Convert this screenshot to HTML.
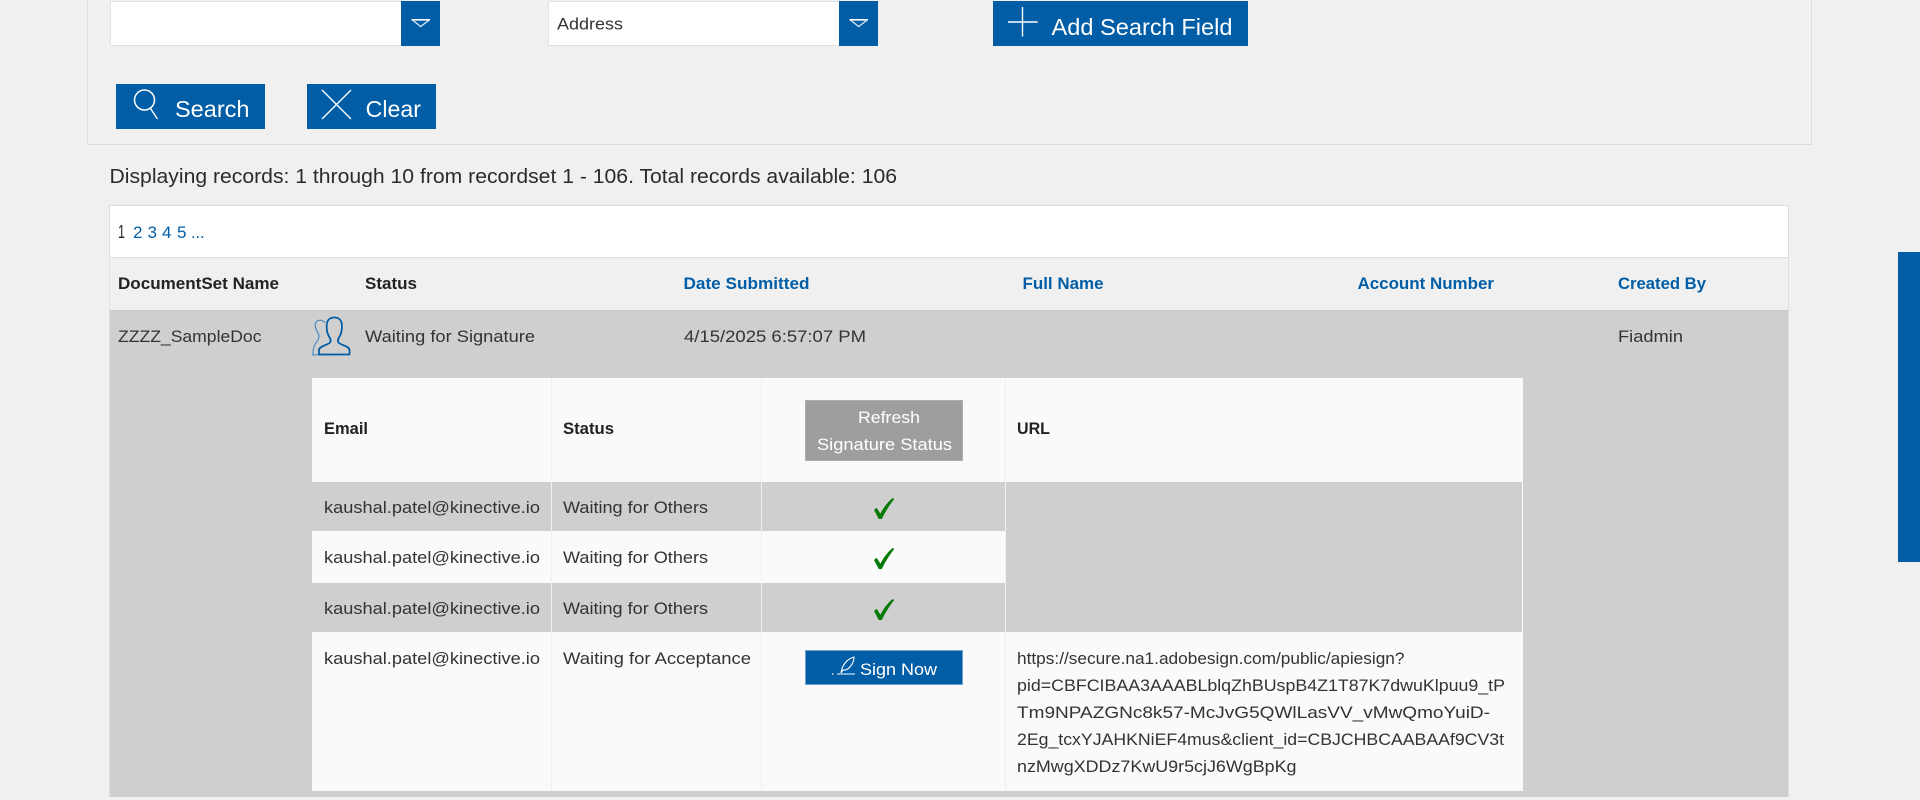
<!DOCTYPE html>
<html lang="en">
<head>
<meta charset="utf-8">
<title>Document Search</title>
<style>
html,body{margin:0;padding:0;background:#f0f0f0;}
body{position:relative;width:1920px;height:800px;overflow:hidden;font-family:"Liberation Sans",Arial,sans-serif;}
.b{position:absolute;box-sizing:border-box;}
.blue{background:#005da6;}
svg{position:absolute;left:0;top:0;}
text{font-family:"Liberation Sans",Arial,sans-serif;font-size:17px;fill:#333;}
.bd{font-weight:bold;fill:#222;}
.lk{font-weight:bold;fill:#005da6;}
.w{fill:#fff;}
</style>
</head>
<body>
<!-- search panel -->
<div class="b" style="left:87px;top:-10px;width:1725px;height:155px;border:1px solid #dcdcdc;border-top:0;"></div>
<div class="b" style="left:110px;top:1px;width:292px;height:45px;background:#fff;border:1px solid #e2e2e2;"></div>
<div class="b blue" style="left:401px;top:1px;width:39px;height:45px;"></div>
<div class="b" style="left:548px;top:1px;width:292px;height:45px;background:#fff;border:1px solid #e2e2e2;"></div>
<div class="b blue" style="left:839px;top:1px;width:39px;height:45px;"></div>
<div class="b blue" style="left:993px;top:1px;width:255px;height:45px;"></div>
<div class="b blue" style="left:116px;top:84px;width:149px;height:45px;"></div>
<div class="b blue" style="left:307px;top:84px;width:129px;height:45px;"></div>
<!-- grid -->
<div class="b" style="left:109px;top:205px;width:1680px;height:53px;background:#fff;border:1px solid #dedede;"></div>
<div class="b" style="left:109px;top:257px;width:1680px;height:54px;background:#f0f0f0;border:1px solid #dedede;border-top:1px solid #dedede;"></div>
<div class="b" style="left:109px;top:310px;width:1680px;height:487px;background:#cfcfcf;border-left:1px solid #dedede;border-right:1px solid #dedede;border-top:1px solid #c9c9c9;"></div>
<!-- inner table -->
<div class="b" style="left:312px;top:378px;width:1211px;height:413px;background:#fafafa;"></div>
<div class="b" style="left:312px;top:482px;width:450px;height:49px;background:#cfcfcf;"></div>
<div class="b" style="left:762px;top:482px;width:243px;height:49px;background:#cfcfcf;"></div>
<div class="b" style="left:312px;top:583px;width:693px;height:49px;background:#cfcfcf;"></div>
<div class="b" style="left:1006px;top:482px;width:516px;height:150px;background:#cfcfcf;"></div>
<div class="b" style="left:551px;top:378px;width:1px;height:413px;background:#f0f0f0;"></div>
<div class="b" style="left:761px;top:378px;width:1px;height:413px;background:#f0f0f0;"></div>
<div class="b" style="left:1005px;top:378px;width:1px;height:413px;background:#f0f0f0;"></div>
<!-- buttons inside table -->
<div class="b" style="left:805px;top:400px;width:158px;height:61px;background:#a09e9c;border:1px solid #b0aeac;"></div>
<div class="b blue" style="left:805px;top:650px;width:158px;height:35px;border:1px solid #6ea3cf;"></div>
<!-- right side tab -->
<div class="b blue" style="left:1898px;top:252px;width:22px;height:310px;"></div>

<svg width="1920" height="800" viewBox="0 0 1920 800" xmlns="http://www.w3.org/2000/svg">
  <!-- dropdown arrows -->
  <g fill="none" stroke="#fff">
    <path d="M411.5 19.8H430" stroke-width="1.6"/>
    <path d="M413 20.5L420.7 26.5L428.5 20.5" stroke="#d6e6f4" stroke-width="1.3"/>
    <path d="M849.5 19.8H868" stroke-width="1.6"/>
    <path d="M851 20.5L858.7 26.5L866.5 20.5" stroke="#d6e6f4" stroke-width="1.3"/>
    <!-- plus -->
    <path d="M1008 22H1037.6M1022.5 7V36.5" stroke-width="1.4"/>
    <!-- magnifier -->
    <ellipse cx="144.5" cy="100" rx="10" ry="10" stroke-width="1.5"/>
    <path d="M150.5 108.5L157.5 119" stroke-width="1.4"/>
    <!-- clear x -->
    <path d="M322 90L351 119M351 90L322 119" stroke-width="1.4"/>
    <!-- quill -->
    <path d="M841 673C842 665 847 659 854 657C854 664 848 671 843 670Z" stroke-width="1.1"/>
    <path d="M837 674H855" stroke-width="1"/>
    <path d="M832 674H833.5" stroke-width="1.2"/>
  </g>

  <!-- person icon -->
  <path d="M325 322.5C321 319 317 320 315.5 323C314.5 327 316 330 318 333C320 336 318.5 340 316.5 342C314 345 313 349 312.8 354.8H330" fill="none" stroke="#4c8cc4" stroke-width="1.2"/>
  <path d="M319 354.5V350C319 346 328 345 330 342.5C331.5 340.5 330 338 328.5 335.5C327 332.5 326.5 329 326.7 325C327 320 330 317.5 334.3 317.5C338.6 317.5 341.6 320 341.9 325C342.1 329 341.6 332.5 340.1 335.5C338.6 338 337 340.5 338.5 342.5C340.5 345 349.5 346 349.5 350V354.5Z" fill="none" stroke="#005da6" stroke-width="1.8" stroke-linejoin="round"/>

  <!-- checks -->
  <g fill="#067a06">
    <path d="M874 510L876.6 507.8L880.4 513.6C884 506.6 888.2 501.6 892.6 498L894.2 499C889.6 505 885 512 881.8 519H878.8Z"/>
    <path d="M874 560L876.6 557.8L880.4 563.6C884 556.6 888.2 551.6 892.6 548L894.2 549C889.6 555 885 562 881.8 569H878.8Z"/>
    <path d="M874 611L876.6 608.8L880.4 614.6C884 607.6 888.2 602.6 892.6 599L894.2 600C889.6 606 885 613 881.8 620H878.8Z"/>
  </g>

  <!-- top controls text -->
  <text x="557" y="29.5" textLength="66" lengthAdjust="spacingAndGlyphs" style="font-size:17px">Address</text>
  <text class="w" x="1051.5" y="35" textLength="181" lengthAdjust="spacingAndGlyphs" style="font-size:23px">Add Search Field</text>
  <text class="w" x="175" y="117" textLength="74.5" lengthAdjust="spacingAndGlyphs" style="font-size:23px">Search</text>
  <text class="w" x="365.7" y="117" textLength="55.3" lengthAdjust="spacingAndGlyphs" style="font-size:23px">Clear</text>
  <text x="109.5" y="183" textLength="787.5" lengthAdjust="spacingAndGlyphs" style="font-size:20px;fill:#2b2b2b">Displaying records: 1 through 10 from recordset 1 - 106. Total records available: 106</text>

  <!-- pager -->
  <g>
    <text x="118" y="238" style="font-size:18px;fill:#222" textLength="7" lengthAdjust="spacingAndGlyphs">1</text>
    <text x="133" y="238" style="fill:#005da6" textLength="9.5" lengthAdjust="spacingAndGlyphs">2</text>
    <text x="147.5" y="238" style="fill:#005da6" textLength="9.5" lengthAdjust="spacingAndGlyphs">3</text>
    <text x="162" y="238" style="fill:#005da6" textLength="9.5" lengthAdjust="spacingAndGlyphs">4</text>
    <text x="177" y="238" style="fill:#005da6" textLength="9.5" lengthAdjust="spacingAndGlyphs">5</text>
    <text x="191" y="238" style="fill:#005da6" textLength="13.5" lengthAdjust="spacingAndGlyphs">...</text>
  </g>

  <!-- header -->
  <text class="bd" x="118" y="289" textLength="161" lengthAdjust="spacingAndGlyphs">DocumentSet Name</text>
  <text class="bd" x="365" y="289" textLength="52" lengthAdjust="spacingAndGlyphs">Status</text>
  <text class="lk" x="683.5" y="289" textLength="126" lengthAdjust="spacingAndGlyphs">Date Submitted</text>
  <text class="lk" x="1022.5" y="289" textLength="81" lengthAdjust="spacingAndGlyphs">Full Name</text>
  <text class="lk" x="1357.5" y="289" textLength="136.5" lengthAdjust="spacingAndGlyphs">Account Number</text>
  <text class="lk" x="1618" y="289" textLength="88" lengthAdjust="spacingAndGlyphs">Created By</text>

  <!-- row -->
  <text x="118" y="342" textLength="143.5" lengthAdjust="spacingAndGlyphs">ZZZZ_SampleDoc</text>
  <text x="365" y="342" textLength="170" lengthAdjust="spacingAndGlyphs">Waiting for Signature</text>
  <text x="684" y="342" textLength="182" lengthAdjust="spacingAndGlyphs">4/15/2025 6:57:07 PM</text>
  <text x="1618" y="342" textLength="65" lengthAdjust="spacingAndGlyphs">Fiadmin</text>

  <!-- inner header -->
  <text class="bd" x="324" y="434" textLength="44" lengthAdjust="spacingAndGlyphs">Email</text>
  <text class="bd" x="563" y="434" textLength="51" lengthAdjust="spacingAndGlyphs">Status</text>
  <text class="bd" x="1017" y="434" textLength="33" lengthAdjust="spacingAndGlyphs">URL</text>
  <text x="858" y="423" textLength="62" lengthAdjust="spacingAndGlyphs" style="fill:#fff">Refresh</text>
  <text x="817" y="450" textLength="135" lengthAdjust="spacingAndGlyphs" style="fill:#fff">Signature Status</text>

  <!-- inner rows -->
  <text x="324" y="513" textLength="216" lengthAdjust="spacingAndGlyphs">kaushal.patel@kinective.io</text>
  <text x="563" y="513" textLength="145" lengthAdjust="spacingAndGlyphs">Waiting for Others</text>
  <text x="324" y="563" textLength="216" lengthAdjust="spacingAndGlyphs">kaushal.patel@kinective.io</text>
  <text x="563" y="563" textLength="145" lengthAdjust="spacingAndGlyphs">Waiting for Others</text>
  <text x="324" y="614" textLength="216" lengthAdjust="spacingAndGlyphs">kaushal.patel@kinective.io</text>
  <text x="563" y="614" textLength="145" lengthAdjust="spacingAndGlyphs">Waiting for Others</text>
  <text x="324" y="664" textLength="216" lengthAdjust="spacingAndGlyphs">kaushal.patel@kinective.io</text>
  <text x="563" y="664" textLength="188" lengthAdjust="spacingAndGlyphs">Waiting for Acceptance</text>
  <text class="w" x="860" y="675" textLength="77" lengthAdjust="spacingAndGlyphs" style="font-size:17px">Sign Now</text>

  <!-- url -->
  <text x="1017" y="664" textLength="387.5" lengthAdjust="spacingAndGlyphs">https://secure.na1.adobesign.com/public/apiesign?</text>
  <text x="1017" y="691" textLength="488" lengthAdjust="spacingAndGlyphs">pid=CBFCIBAA3AAABLblqZhBUspB4Z1T87K7dwuKlpuu9_tP</text>
  <text x="1017" y="718" textLength="473" lengthAdjust="spacingAndGlyphs">Tm9NPAZGNc8k57-McJvG5QWlLasVV_vMwQmoYuiD-</text>
  <text x="1017" y="745" textLength="487" lengthAdjust="spacingAndGlyphs">2Eg_tcxYJAHKNiEF4mus&amp;client_id=CBJCHBCAABAAf9CV3t</text>
  <text x="1017" y="772" textLength="279.5" lengthAdjust="spacingAndGlyphs">nzMwgXDDz7KwU9r5cjJ6WgBpKg</text>
</svg>
</body>
</html>
